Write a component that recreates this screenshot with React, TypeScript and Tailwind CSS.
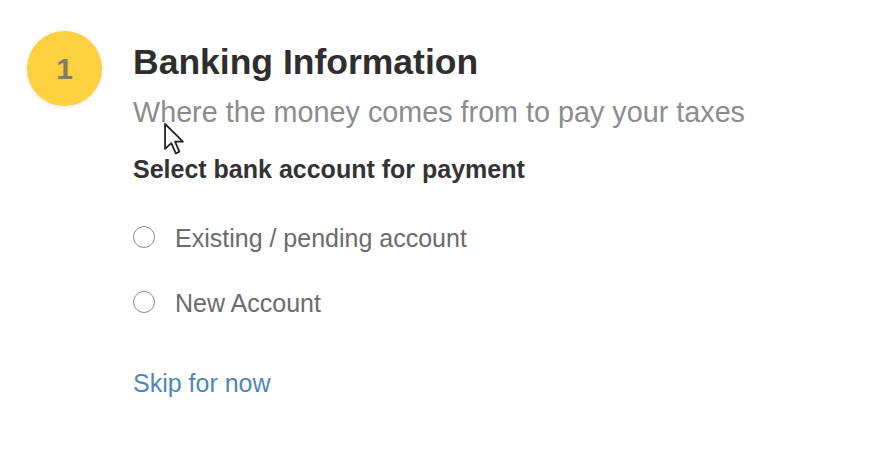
import React from 'react';

const options = ['Existing / pending account', 'New Account'];

function Cursor() {
  return (
    <svg
      className="pointer-events-none absolute left-[162px] top-[122px]"
      width="24"
      height="34"
      viewBox="0 0 12 19"
    >
      <path
        d="M1 1 L1 15 L4.5 11.8 L7 17.5 L9 16.6 L6.6 11 L11 11 Z"
        fill="#fff"
        stroke="#222"
        strokeWidth="1"
        strokeLinejoin="round"
      />
    </svg>
  );
}

export default function App() {
  return (
    <main
      className="relative min-h-[462px] bg-white"
      style={{ fontFamily: '"Liberation Sans", Arial, sans-serif' }}
    >
      <div className="flex gap-[31px] pl-[27px] pt-[31px]">
        <div className="flex h-[75px] w-[75px] shrink-0 items-center justify-center rounded-full bg-[#fcd03e] shadow-[0_1px_4px_rgba(0,0,0,0.12)]">
          <span className="text-[30px] font-bold leading-none text-[#7f7b68]">1</span>
        </div>

        <div className="flex flex-col pt-[14px]">
          <h1 className="text-[35.5px] font-bold leading-[35px] text-[#2e2e2e]">Banking Information</h1>
          <p className="mt-[18px] text-[28.75px] leading-[28px] text-[#8c8c8c]">
            Where the money comes from to pay your taxes
          </p>

          <h2 className="mt-[31px] text-[25px] font-bold leading-[25px] text-[#333]">
            Select bank account for payment
          </h2>

          <div className="mt-[44px] flex flex-col gap-[40px]">
            {options.map((label) => (
              <label key={label} className="flex items-center gap-[20px]">
                <span className="-mt-[4px] h-[22px] w-[22px] shrink-0 rounded-full border-[1.5px] border-[#8c8c8c] bg-white" />
                <span className="text-[25px] leading-[25px] text-[#6b6b6b]">{label}</span>
              </label>
            ))}
          </div>

          <a className="mt-[55px] text-[25px] leading-[25px] text-[#4d87b8]">Skip for now</a>
        </div>
      </div>
      <Cursor />
    </main>
  );
}
